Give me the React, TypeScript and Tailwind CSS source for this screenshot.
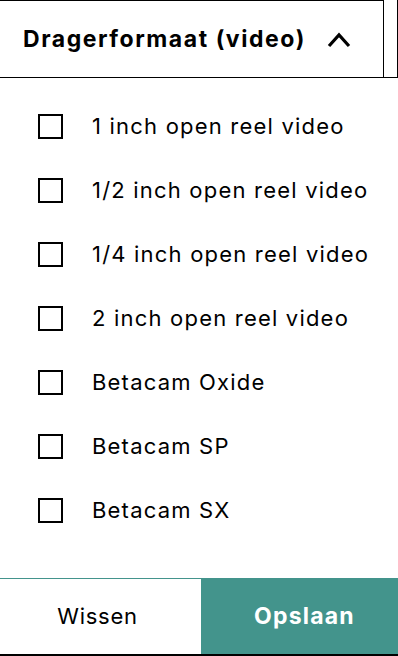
const formats = [
  "1 inch open reel video",
  "1/2 inch open reel video",
  "1/4 inch open reel video",
  "2 inch open reel video",
  "Betacam Oxide",
  "Betacam SP",
  "Betacam SX",
]

export default function App() {
  return (
    <div className="w-[398px] h-[656px] bg-white flex flex-col text-black font-['Inter',sans-serif]">
      {/* Header */}
      <div className="h-[78px] border-b border-r border-black flex">
        <button className="w-[384px] h-full border-t border-r border-black flex items-center pl-[23px] gap-[21px]">
          <span className="text-[23px] font-bold tracking-[1.55px]">Dragerformaat (video)</span>
          <svg width="24" height="16" viewBox="0 0 24 16" className="mt-[1px]">
            <polyline points="2,14 12,3 22,14" fill="none" stroke="black" strokeWidth="3.2" />
          </svg>
        </button>
      </div>

      {/* Options */}
      <ul className="flex-1 pt-[16px] flex flex-col">
        {formats.map((f) => (
          <li key={f} className="h-[64px] flex items-center pl-[38px]">
            <span className="w-[25px] h-[25px] border-[2.5px] border-black shrink-0" />
            <span className="ml-[29px] text-[22px] tracking-[1.2px]">{f}</span>
          </li>
        ))}
      </ul>

      {/* Footer */}
      <div className="h-[78px] border-t border-[#43948c] border-b-2 border-b-black flex">
        <button className="w-[201px] pr-[6px] text-[22px] tracking-[0.7px]">Wissen</button>
        <button className="flex-1 pl-[10px] bg-[#43948c] text-white text-[23px] font-bold tracking-[1.2px]">Opslaan</button>
      </div>
    </div>
  )
}
